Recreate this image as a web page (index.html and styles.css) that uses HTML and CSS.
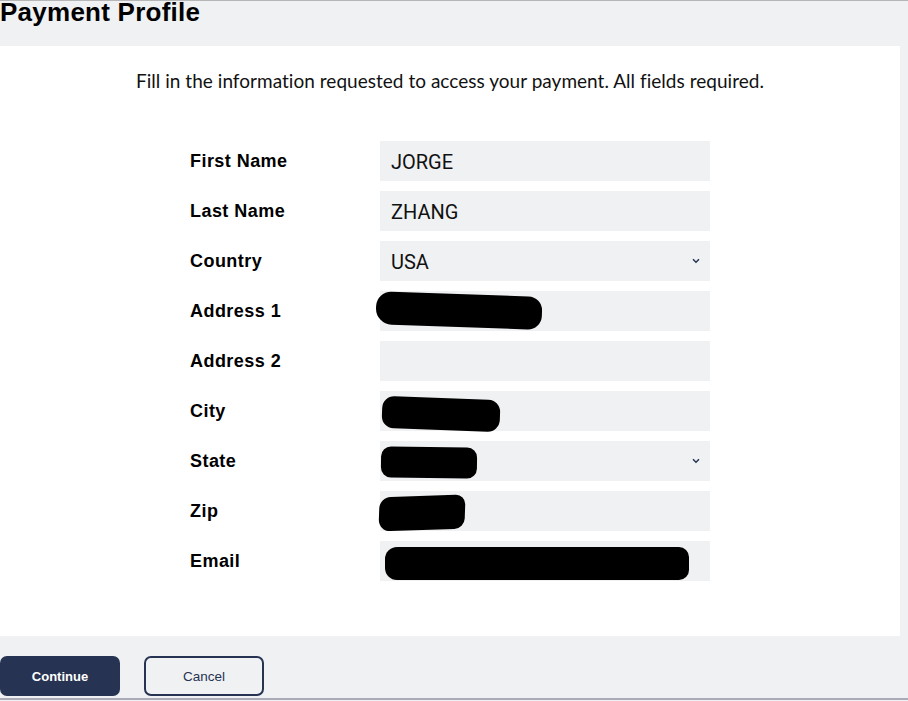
FILE: index.html
```html
<!DOCTYPE html>
<html lang="en">
<head>
<meta charset="utf-8">
<title>Payment Profile</title>
<link rel="stylesheet" href="styles.css">
</head>
<body>
<header class="page-header">
  <h1 class="page-title">Payment Profile</h1>
</header>
<main class="panel">
  <p class="intro">Fill in the information requested to access your payment. All fields required.</p>
  <form class="profile-form">
    <label class="label">First Name</label>
    <div class="field"><span class="value">JORGE</span></div>

    <label class="label">Last Name</label>
    <div class="field"><span class="value">ZHANG</span></div>

    <label class="label">Country</label>
    <div class="field select"><span class="value">USA</span>
      <svg class="chev" width="8" height="6" viewBox="0 0 8 6"><path d="M1 1.2 L4 4.2 L7 1.2" fill="none" stroke="#263352" stroke-width="1.5"/></svg>
    </div>

    <label class="label">Address 1</label>
    <div class="field"><span class="redact r-addr"></span></div>

    <label class="label">Address 2</label>
    <div class="field"></div>

    <label class="label">City</label>
    <div class="field"><span class="redact r-city"></span></div>

    <label class="label">State</label>
    <div class="field select"><span class="redact r-state"></span>
      <span class="spacer"></span>
      <svg class="chev" width="8" height="6" viewBox="0 0 8 6"><path d="M1 1.2 L4 4.2 L7 1.2" fill="none" stroke="#263352" stroke-width="1.5"/></svg>
    </div>

    <label class="label">Zip</label>
    <div class="field"><span class="redact r-zip"></span></div>

    <label class="label">Email</label>
    <div class="field"><span class="redact r-email"></span></div>
  </form>
</main>
<footer class="actions">
  <button class="btn btn-primary" type="button">Continue</button>
  <button class="btn btn-secondary" type="button">Cancel</button>
</footer>
</body>
</html>
```
FILE: styles.css
```css
html, body {
  margin: 0;
  padding: 0;
}
body {
  background: #f0f1f3;
  border-top: 1px solid #b6b6b6;
  width: 908px;
  height: 700px;
  box-sizing: border-box;
  overflow: hidden;
  font-family: "Liberation Sans", Arial, sans-serif;
  color: #000;
}
.page-header {
  height: 45px;
}
.page-title {
  margin: 0;
  font-size: 26px;
  line-height: 23px;
  font-weight: 700;
  letter-spacing: 0.25px;
  color: #000;
}
.panel {
  background: #fff;
  width: 900px;
  height: 590px;
  box-sizing: border-box;
  padding-top: 24px;
}
.intro {
  margin: 0;
  text-align: center;
  font-family: Lato, "Open Sans", sans-serif;
  font-size: 19px;
  line-height: 22px;
  letter-spacing: 0.03px;
  color: #111;
}
.profile-form {
  margin: 49px auto 0;
  width: 520px;
  display: grid;
  grid-template-columns: 190px 330px;
  grid-auto-rows: 40px;
  row-gap: 10px;
  align-items: center;
}
.label {
  font-size: 18px;
  font-weight: 700;
  letter-spacing: 0.45px;
  color: #000;
}
.field {
  position: relative;
  height: 40px;
  background: #f0f1f3;
  display: flex;
  align-items: center;
  padding: 2px 10px 0 11px;
  box-sizing: border-box;
}
.field.select {
  justify-content: space-between;
}
.value {
  font-family: Roboto, "Liberation Sans", sans-serif;
  font-size: 20px;
  color: #111;
}
.chev {
  display: block;
  margin-top: -2px;
}
.spacer {
  flex: 1;
}
.redact {
  position: absolute;
  background: #000;
  display: block;
}
.r-addr {
  left: -4px;
  top: 3px;
  width: 166px;
  height: 33px;
  border-radius: 15px 14px 14px 16px;
  transform: rotate(2deg);
}
.r-city {
  left: 2px;
  top: 7px;
  width: 118px;
  height: 32px;
  border-radius: 12px;
  transform: rotate(2deg);
}
.r-state {
  left: 1px;
  top: 6px;
  width: 96px;
  height: 31px;
  border-radius: 10px;
  transform: rotate(0.8deg);
}
.r-zip {
  left: -1px;
  top: 5px;
  width: 86px;
  height: 34px;
  border-radius: 11px 10px 10px 12px;
  transform: rotate(-2deg) skewX(-4deg);
}
.r-email {
  left: 5px;
  top: 6px;
  width: 304px;
  height: 33px;
  border-radius: 12px 10px 10px 12px;
}
.actions {
  display: flex;
  gap: 24px;
  padding: 20px 0 2px;
  border-bottom: 2px solid #a9acb8;
}
.btn {
  width: 120px;
  height: 40px;
  border-radius: 7px;
  box-sizing: border-box;
  font-family: "Liberation Sans", Arial, sans-serif;
  cursor: pointer;
  padding: 0;
}
.btn-primary {
  background: #263352;
  border: none;
  color: #fff;
  font-weight: 700;
  font-size: 13px;
}
.btn-secondary {
  background: #f0f1f3;
  border: 2px solid #263352;
  color: #263352;
  font-size: 13.5px;
}
```
